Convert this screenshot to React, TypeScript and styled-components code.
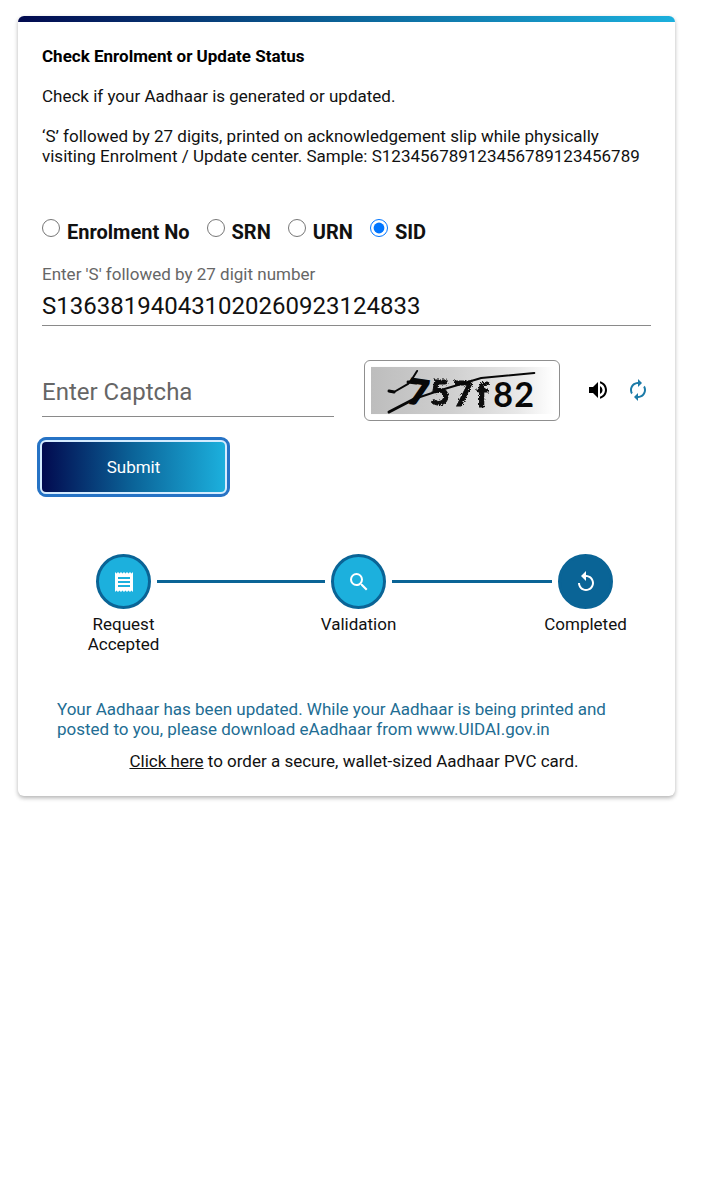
import React, { useState } from "react";
import styled, { createGlobalStyle, css } from "styled-components";
import { MdAutorenew, MdReceipt, MdSearch, MdReplay, MdVolumeUp } from "react-icons/md";

const GlobalStyle = createGlobalStyle`
  * { box-sizing: border-box; }
  body {
    margin: 0;
    background: #fff;
    color: #111;
    font-family: Roboto, "Liberation Sans", sans-serif;
    font-size: 17px;
    line-height: 20px;
  }
`;

const Page = styled.div`
  display: flow-root;
`;

const Card = styled.main`
  margin: 16px 26px 32px 18px;
  padding: 0 24px 25px;
  border-radius: 6px;
  overflow: hidden;
  background: #fff;
  box-shadow: 0 2px 4px rgba(0, 0, 0, 0.3);
`;

const TopBar = styled.div`
  height: 6px;
  margin: 0 -24px 24px;
  background: linear-gradient(90deg, #020a4f, #0b6499 50%, #1cb0dd);
`;

const Title = styled.h1`
  margin: 0 0 20px;
  font-size: 17px;
  line-height: 20px;
  font-weight: 700;
  color: #000;
`;

const Paragraph = styled.p`
  margin: 0 0 20px;
`;

const Options = styled.fieldset`
  display: flex;
  flex-wrap: wrap;
  gap: 17px;
  margin: 52px 0 0;
  padding: 0;
  border: 0;
`;

const Option = styled.label`
  display: flex;
  gap: 7px;
  font-size: 20px;
  line-height: 28px;
  font-weight: 700;
  color: #111;
`;

const Radio = styled.input`
  width: 18px;
  height: 18px;
  margin: 1px 0 0;
  accent-color: #0075ff;
`;

const Field = styled.div`
  display: flex;
  flex-direction: column;
  margin-top: 18px;
`;

const FieldLabel = styled.label`
  color: #666;
`;

const inputText = css`
  width: 100%;
  padding: 0;
  border: 0;
  border-bottom: 1px solid #8a8a8a;
  border-radius: 0;
  outline: 0;
  background: transparent;
  color: #111;
  font-family: inherit;
  font-size: 24px;
`;

const NumberInput = styled.input`
  ${inputText}
  height: 42px;
  padding-top: 2px;
`;

const CaptchaRow = styled.div`
  display: grid;
  grid-template-columns: 48fr 37fr 15fr;
  align-items: start;
  margin-top: 34px;
`;

const CaptchaInput = styled.input`
  ${inputText}
  height: 49px;
  margin-top: 8px;
  &::placeholder {
    color: #666;
    opacity: 1;
  }
`;

const CaptchaFrame = styled.div`
  height: 61px;
  margin-left: 30px;
  padding: 6px 4px 6px 6px;
  border: 1px solid #8f8f8f;
  border-radius: 6px;
  svg {
    display: block;
    width: 100%;
    height: 47px;
  }
`;

const CaptchaActions = styled.div`
  display: flex;
  justify-content: flex-end;
  align-items: center;
  gap: 16px;
  height: 60px;
  padding-right: 1px;
`;

const IconButton = styled.button<{ $color: string }>`
  display: flex;
  padding: 0;
  border: 0;
  background: none;
  color: ${(p) => p.$color};
  cursor: pointer;
`;

const SubmitButton = styled.button`
  display: block;
  width: 183px;
  height: 50px;
  margin: 21px 0 0;
  border: 0;
  border-radius: 4px;
  outline: 3px solid #2673c5;
  outline-offset: 2px;
  background: linear-gradient(90deg, #020a4f, #0b6499 50%, #1cb0dd);
  box-shadow: 0 0 0 2px #d5ecff;
  color: #fff;
  font-family: inherit;
  font-size: 17px;
  cursor: pointer;
`;

const Steps = styled.div`
  display: flex;
  align-items: flex-start;
  margin: 62px 38px 0 54px;
`;

const Step = styled.div`
  display: flex;
  flex-direction: column;
  align-items: center;
  width: 55px;
`;

const StepIcon = styled.div<{ $done?: boolean }>`
  display: flex;
  align-items: center;
  justify-content: center;
  flex: none;
  width: 55px;
  height: 55px;
  border: 3px solid #0a6496;
  border-radius: 50%;
  background: ${(p) => (p.$done ? "#0a6496" : "#1cb0dd")};
  color: #fff;
`;

const StepLabel = styled.div`
  margin-top: 5px;
  text-align: center;
  white-space: nowrap;
`;

const Connector = styled.div<{ $grow: number }>`
  flex: ${(p) => p.$grow} 1 0;
  height: 3px;
  margin: 26px 6px 0;
  background: #0a6496;
`;

const Result = styled.section`
  margin: 45px 0 0 15px;
`;

const Message = styled.p`
  margin: 0 0 12px;
  color: #226d93;
`;

const Order = styled.p`
  margin: 0;
  text-align: center;
  a {
    color: inherit;
  }
`;

const CaptchaPicture = () => (
  <svg viewBox="0 0 183 47" preserveAspectRatio="xMidYMid slice" overflow="visible" role="img" aria-label="Captcha">
    <defs>
      <linearGradient id="paper" x1="0" x2="1" y1="0" y2="0">
        <stop offset="0" stopColor="#bdbdbd" />
        <stop offset="0.45" stopColor="#d0d0d0" />
        <stop offset="0.8" stopColor="#e8e8e8" />
        <stop offset="1" stopColor="#fff" />
      </linearGradient>
      <filter id="bristle" x="-10%" y="-10%" width="120%" height="120%">
        <feTurbulence type="fractalNoise" baseFrequency="0.7" numOctaves="2" seed="4" />
        <feDisplacementMap in="SourceGraphic" scale="4" />
        <feGaussianBlur stdDeviation="0.5" />
      </filter>
    </defs>
    <rect width="183" height="47" fill="url(#paper)" />
    <g fill="#080808" stroke="#080808" fontFamily="Lato, sans-serif" fontWeight="700" fontSize="34">
      <text x="37" y="37" transform="rotate(8 46 28)" strokeWidth="2">7</text>
      <g filter="url(#bristle)" strokeWidth="1">
        <text x="59" y="38">5</text>
        <text x="82" y="39">7</text>
        <text x="105" y="40">f</text>
      </g>
      <g stroke="none">
        <text x="122" y="40">8</text>
        <text x="143" y="40">2</text>
      </g>
    </g>
    <g fill="none" stroke="#080808" strokeLinecap="round" strokeLinejoin="round">
      <path d="M18 24L23 25L37 17L41 12L46 4" strokeWidth="2" />
      <path d="M18 24L23 25" strokeWidth="3" />
      <path d="M37 15L45 16" strokeWidth="3" />
      <path d="M18 45L43 32" strokeWidth="3" />
      <path d="M43 32L70 23L110 11L163 6" strokeWidth="2" />
    </g>
  </svg>
);

const kinds = ["Enrolment No", "SRN", "URN", "SID"];

export default function App() {
  const [kind, setKind] = useState("SID");
  const [number, setNumber] = useState("S136381940431020260923124833");
  return (
    <Page>
      <GlobalStyle />
      <Card>
        <TopBar />
        <Title>Check Enrolment or Update Status</Title>
        <Paragraph>Check if your Aadhaar is generated or updated.</Paragraph>
        <Paragraph>
          ‘S’ followed by 27 digits, printed on acknowledgement slip while physically visiting
          Enrolment / Update center. Sample: S123456789123456789123456789
        </Paragraph>
        <form onSubmit={(e) => e.preventDefault()}>
          <Options aria-label="Number type">
            {kinds.map((k) => (
              <Option key={k}>
                <Radio type="radio" name="kind" checked={kind === k} onChange={() => setKind(k)} />
                {k}
              </Option>
            ))}
          </Options>
          <Field>
            <FieldLabel htmlFor="number">Enter 'S' followed by 27 digit number</FieldLabel>
            <NumberInput id="number" value={number} onChange={(e) => setNumber(e.target.value)} />
          </Field>
          <CaptchaRow>
            <CaptchaInput aria-label="Enter Captcha" placeholder="Enter Captcha" />
            <CaptchaFrame>
              <CaptchaPicture />
            </CaptchaFrame>
            <CaptchaActions>
              <IconButton type="button" $color="#000" aria-label="Play captcha audio">
                <MdVolumeUp size={24} />
              </IconButton>
              <IconButton type="button" $color="#1c7ba8" aria-label="Refresh captcha">
                <MdAutorenew size={24} />
              </IconButton>
            </CaptchaActions>
          </CaptchaRow>
          <SubmitButton type="submit">Submit</SubmitButton>
        </form>
        <Steps>
          <Step>
            <StepIcon><MdReceipt size={24} /></StepIcon>
            <StepLabel>Request<br />Accepted</StepLabel>
          </Step>
          <Connector $grow={21} />
          <Step>
            <StepIcon><MdSearch size={24} /></StepIcon>
            <StepLabel>Validation</StepLabel>
          </Step>
          <Connector $grow={20} />
          <Step>
            <StepIcon $done><MdReplay size={24} /></StepIcon>
            <StepLabel>Completed</StepLabel>
          </Step>
        </Steps>
        <Result>
          <Message>
            Your Aadhaar has been updated. While your Aadhaar is being printed and posted to you,
            please download eAadhaar from www.UIDAI.gov.in
          </Message>
          <Order>
            <a href="#order">Click here</a> to order a secure, wallet-sized Aadhaar PVC card.
          </Order>
        </Result>
      </Card>
    </Page>
  );
}
